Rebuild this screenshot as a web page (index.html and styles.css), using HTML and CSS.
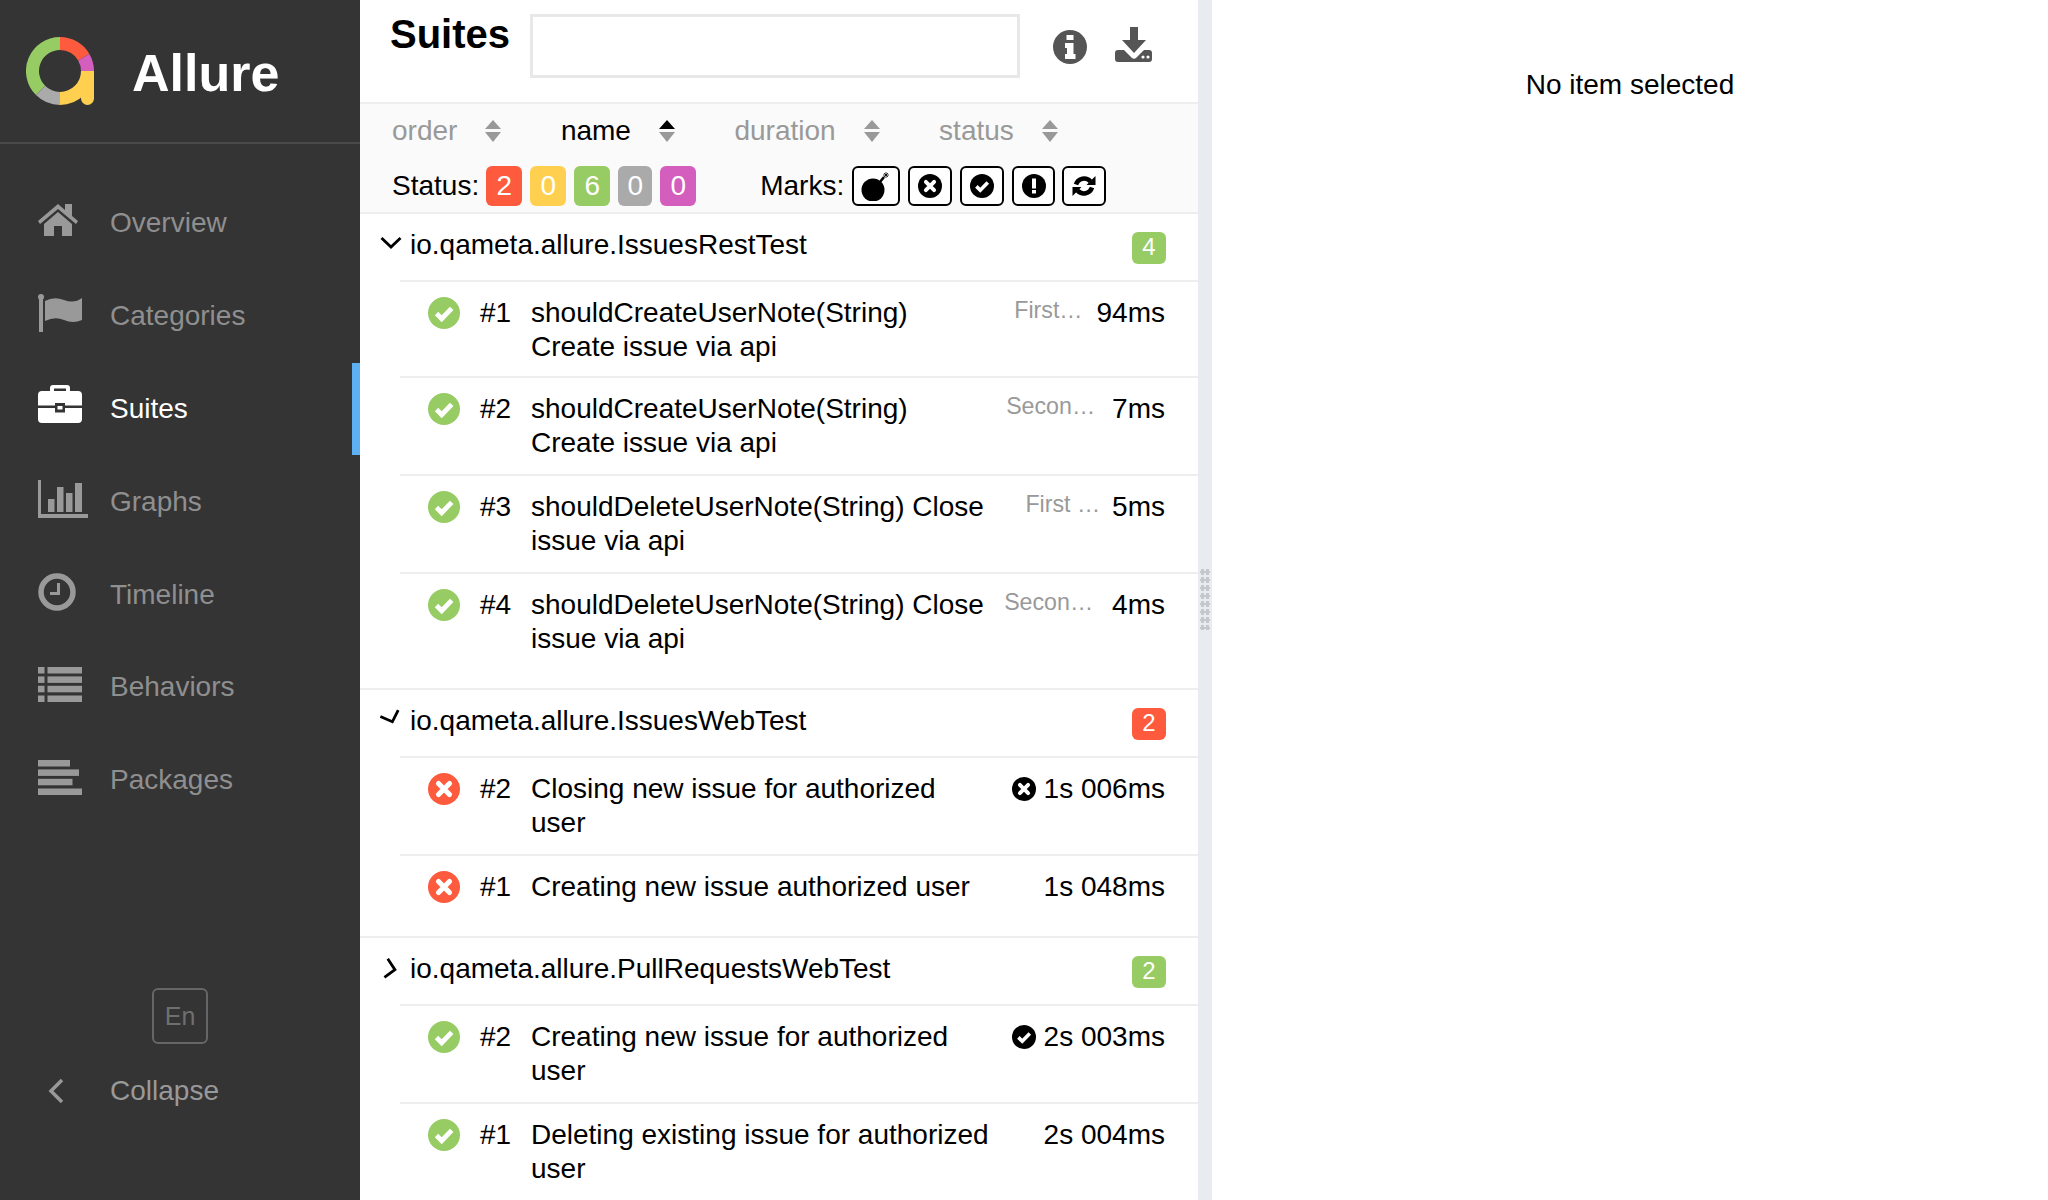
FILE: index.html
```html
<!DOCTYPE html>
<html lang="en">
<head>
  <meta charset="UTF-8" />
  <meta name="viewport" content="width=device-width, initial-scale=1.0"/>
  <title>Allure</title>
  <link rel="stylesheet" href="styles.css">
</head>
<body>
  <!-- shared icons -->
  <svg class="icon-defs">
    <symbol id="i-check" viewBox="0 0 32 32">
      <circle cx="16" cy="16" r="16" fill="currentColor"/>
      <polyline points="8.5,16.5 13.7,21.7 23.7,11.3" fill="none" stroke="#fff" stroke-width="4.8"/>
    </symbol>
    <symbol id="i-cross" viewBox="0 0 32 32">
      <circle cx="16" cy="16" r="16" fill="currentColor"/>
      <path d="M10.5 10.5 L21.5 21.5 M21.5 10.5 L10.5 21.5" fill="none" stroke="#fff" stroke-width="5.2" stroke-linecap="round"/>
    </symbol>
    <symbol id="i-sort" viewBox="0 0 16 22">
      <path d="M8 0 L16 9 H0 Z"/>
      <path d="M0 12 H16 L8 22 Z"/>
    </symbol>
  </svg>

  <div class="app">
    <!-- Sidebar -->
    <aside class="side">
      <div class="brand">
        <svg class="logo" viewBox="0 0 68 68">
          <g fill="none" stroke-width="13">
            <path stroke="#97cc64" d="M14.55 53.45 A27.5 27.5 0 0 1 34 6.5"/>
            <path stroke="#fd5a3e" d="M34 6.5 A27.5 27.5 0 0 1 57.8 20.25"/>
            <path stroke="#d35ebe" d="M57.8 20.25 A27.5 27.5 0 0 1 61.5 34"/>
            <path stroke="#ffd050" d="M61.5 34 A27.5 27.5 0 0 1 34 61.5"/>
            <path stroke="#aaa" d="M34 61.5 A27.5 27.5 0 0 1 14.55 53.45"/>
          </g>
          <path fill="#ffd050" d="M55 34 H68 V61.5 A6.5 6.5 0 0 1 55 61.5 Z"/>
        </svg>
        <span class="brand-name">Allure</span>
      </div>

      <nav class="nav">
        <a class="nav-item">
          <span class="nav-icon">
            <svg width="40" height="32" viewBox="0 0 40 32"><path d="M20 0 L0 17 L2 20 L20 5 L38 20 L40 17 L34 12 V0 H27 V6 Z"/><path d="M6 20 L20 8 L34 20 V32 H24 V22 H16 V32 H6 Z"/></svg>
          </span>
          Overview
        </a>
        <a class="nav-item">
          <span class="nav-icon">
            <svg width="44" height="38" viewBox="0 0 44 38"><circle cx="3" cy="3" r="3"/><rect x="1" y="3" width="4" height="35"/><path d="M7 7 Q16 2 26 6 T44 4 V26 Q35 30 26 26 T7 27 Z"/></svg>
          </span>
          Categories
        </a>
        <a class="nav-item active">
          <span class="nav-icon">
            <svg width="44" height="38" viewBox="0 0 44 38"><path d="M12 6 V3 Q12 0 15 0 H29 Q32 0 32 3 V6 H28 V3.500 H16 V6 Z"/><path d="M4 6 H40 Q44 6 44 10 V20.500 H27 V18 H17 V20.500 H0 V10 Q0 6 4 6 Z"/><path d="M0 23 H17 V27.500 H27 V23 H44 V34 Q44 38 40 38 H4 Q0 38 0 34 Z"/><rect x="19.500" y="21" width="5" height="3.500"/></svg>
          </span>
          Suites
        </a>
        <a class="nav-item">
          <span class="nav-icon">
            <svg width="50" height="38" viewBox="0 0 50 38"><path d="M0 0 H3 V34 H50 V38 H0 Z"/><rect x="10" y="19" width="6.500" height="13"/><rect x="19" y="7" width="6.500" height="25"/><rect x="28" y="13" width="6.500" height="19"/><rect x="37" y="3" width="7" height="29"/></svg>
          </span>
          Graphs
        </a>
        <a class="nav-item">
          <span class="nav-icon">
            <svg width="38" height="38" viewBox="0 0 38 38"><circle cx="19" cy="19" r="16" class="clock-ring"/><path d="M22 10 V22 H12 V19 H19 V10 Z"/></svg>
          </span>
          Timeline
        </a>
        <a class="nav-item">
          <span class="nav-icon">
            <svg width="44" height="35" viewBox="0 0 44 35">
              <rect width="6.500" height="6.500"/><rect x="9.500" width="34.500" height="6.500"/>
              <rect y="9.400" width="6.500" height="6.500"/><rect x="9.500" y="9.400" width="34.500" height="6.500"/>
              <rect y="18.800" width="6.500" height="6.500"/><rect x="9.500" y="18.800" width="34.500" height="6.500"/>
              <rect y="28.500" width="6.500" height="6.500"/><rect x="9.500" y="28.500" width="34.500" height="6.500"/>
            </svg>
          </span>
          Behaviors
        </a>
        <a class="nav-item">
          <span class="nav-icon">
            <svg width="44" height="35" viewBox="0 0 44 35"><rect width="32" height="6.500"/><rect y="9.400" width="41" height="6.500"/><rect y="18.800" width="34.500" height="6.500"/><rect y="28.500" width="44" height="6.500"/></svg>
          </span>
          Packages
        </a>
      </nav>

      <div class="side-foot">
        <div class="lang">En</div>
        <a class="collapse">
          <span class="collapse-icon">
            <svg width="16" height="26" viewBox="0 0 16 26"><polyline points="14,2 3,13 14,24" fill="none" stroke="#999" stroke-width="3.500"/></svg>
          </span>
          Collapse
        </a>
      </div>
    </aside>

    <!-- Tree pane -->
    <main class="pane">
      <header class="pane-head">
        <h2 class="pane-title">Suites</h2>
        <input type="text" class="search" />
        <svg class="head-info" width="34" height="34" viewBox="0 0 34 34">
          <circle cx="17" cy="17" r="17" fill="#555"/>
          <path fill="#fff" d="M13.500 5 H20.500 V10 H13.500 Z M12 13 H20.500 V24 H22.500 V29 H12 V24 H14 V18 H12 Z"/>
        </svg>
        <svg class="head-download" width="37" height="35" viewBox="0 0 37 35">
          <path fill="#555" d="M15 0 H23 V13 H31 L19 26 L7 13 H15 Z"/>
          <path fill="#555" d="M3 23 H9 L17 31 Q19 32.500 21 31 L29 23 H34 Q37 23 37 26 V32 Q37 35 34 35 H3 Q0 35 0 32 V26 Q0 23 3 23 Z"/>
          <circle cx="28" cy="30" r="1.600" fill="#fff"/><circle cx="33" cy="30" r="1.600" fill="#fff"/>
        </svg>
      </header>

      <div class="toolbar">
        <div class="sorters">
          <span class="sorter">order <svg class="sort-icon"><use href="#i-sort"/></svg></span>
          <span class="sorter sorter-active">name
            <svg class="sort-icon" viewBox="0 0 16 22"><path class="sort-on" d="M8 0 L16 9 H0 Z"/><path d="M0 12 H16 L8 22 Z"/></svg>
          </span>
          <span class="sorter">duration <svg class="sort-icon"><use href="#i-sort"/></svg></span>
          <span class="sorter">status <svg class="sort-icon"><use href="#i-sort"/></svg></span>
        </div>
        <div class="filters">
          <span class="filter-label">Status:</span>
          <div class="chips">
            <span class="chip failed">2</span>
            <span class="chip broken">0</span>
            <span class="chip passed">6</span>
            <span class="chip skipped">0</span>
            <span class="chip unknown">0</span>
          </div>
          <span class="filter-label marks-label">Marks:</span>
          <div class="marks">
            <span class="mark mark-bomb">
              <svg width="36" height="30" viewBox="0 0 36 30">
                <circle cx="15" cy="19" r="11.500"/>
                <path d="M22 11 L26 6" stroke="#000" stroke-width="2.500"/>
                <path d="M28 1 V7 M25 4 H31 M26 2 L30 6 M30 2 L26 6" stroke="#000" stroke-width="0.800"/>
              </svg>
            </span>
            <span class="mark"><svg width="24" height="24"><use href="#i-cross"/></svg></span>
            <span class="mark"><svg width="24" height="24"><use href="#i-check"/></svg></span>
            <span class="mark mark-alert">
              <svg width="24" height="24" viewBox="0 0 24 24"><circle cx="12" cy="12" r="12"/><rect x="10" y="4.500" width="4" height="10" fill="#fff"/><rect x="10" y="16" width="4" height="3.500" fill="#fff"/></svg>
            </span>
            <span class="mark mark-retry">
              <svg width="26" height="24" viewBox="0 0 24 24">
                <g fill="none" stroke="#000" stroke-width="4.600"><path d="M4 10.500 A8.500 8.500 0 0 1 18.500 7.500"/><path d="M20 13.500 A8.500 8.500 0 0 1 5.500 16.500"/></g>
                <path d="M23.500 2 V11 H14.500 Z"/><path d="M0.500 22 V13 H9.500 Z"/>
              </svg>
            </span>
          </div>
        </div>
      </div>

      <div class="tree">
        <section class="group">
          <div class="group-head">
            <svg class="chevron" width="22" height="14" viewBox="0 0 22 14"><polyline points="1.500,2 11,11 20.500,2" fill="none" stroke="#000" stroke-width="2.800"/></svg>
            <span class="group-name">io.qameta.allure.IssuesRestTest</span>
            <span class="count passed">4</span>
          </div>
          <div class="row row-tight">
            <svg class="status-icon is-passed"><use href="#i-check"/></svg>
            <span class="num">#1</span>
            <span class="name">shouldCreateUserNote(String)<br>Create issue via api</span>
            <span class="param param-a">First…</span>
            <span class="time">94ms</span>
          </div>
          <div class="row">
            <svg class="status-icon is-passed"><use href="#i-check"/></svg>
            <span class="num">#2</span>
            <span class="name">shouldCreateUserNote(String)<br>Create issue via api</span>
            <span class="param param-b">Secon…</span>
            <span class="time">7ms</span>
          </div>
          <div class="row">
            <svg class="status-icon is-passed"><use href="#i-check"/></svg>
            <span class="num">#3</span>
            <span class="name">shouldDeleteUserNote(String) Close<br>issue via api</span>
            <span class="param param-c">First …</span>
            <span class="time">5ms</span>
          </div>
          <div class="row">
            <svg class="status-icon is-passed"><use href="#i-check"/></svg>
            <span class="num">#4</span>
            <span class="name">shouldDeleteUserNote(String) Close<br>issue via api</span>
            <span class="param param-d">Secon…</span>
            <span class="time">4ms</span>
          </div>
        </section>

        <section class="group">
          <div class="group-head">
            <svg class="chevron chevron-turn1" width="22" height="14" viewBox="0 0 22 14"><polyline points="1.500,2 11,11 20.500,2" fill="none" stroke="#000" stroke-width="2.800"/></svg>
            <span class="group-name">io.qameta.allure.IssuesWebTest</span>
            <span class="count failed">2</span>
          </div>
          <div class="row">
            <svg class="status-icon is-failed"><use href="#i-cross"/></svg>
            <span class="num">#2</span>
            <span class="name">Closing new issue for authorized<br>user</span>
            <span class="time"><svg class="time-icon"><use href="#i-cross"/></svg>1s 006ms</span>
          </div>
          <div class="row">
            <svg class="status-icon is-failed"><use href="#i-cross"/></svg>
            <span class="num">#1</span>
            <span class="name">Creating new issue authorized user</span>
            <span class="time">1s 048ms</span>
          </div>
        </section>

        <section class="group">
          <div class="group-head">
            <svg class="chevron chevron-turn2" width="22" height="14" viewBox="0 0 22 14"><polyline points="1.500,2 11,11 20.500,2" fill="none" stroke="#000" stroke-width="2.800"/></svg>
            <span class="group-name">io.qameta.allure.PullRequestsWebTest</span>
            <span class="count passed">2</span>
          </div>
          <div class="row">
            <svg class="status-icon is-passed"><use href="#i-check"/></svg>
            <span class="num">#2</span>
            <span class="name">Creating new issue for authorized<br>user</span>
            <span class="time"><svg class="time-icon"><use href="#i-check"/></svg>2s 003ms</span>
          </div>
          <div class="row">
            <svg class="status-icon is-passed"><use href="#i-check"/></svg>
            <span class="num">#1</span>
            <span class="name">Deleting existing issue for authorized<br>user</span>
            <span class="time">2s 004ms</span>
          </div>
        </section>
      </div>
    </main>

    <div class="splitter"><div class="grip"></div></div>

    <!-- Details pane -->
    <section class="details">No item selected</section>
  </div>
</body>
</html>
```

FILE: styles.css
```css
* {
  margin: 0;
  padding: 0;
  box-sizing: border-box;
  font-family: 'Liberation Sans', Arial, sans-serif;
}

html, body {
  height: 100%;
  overflow: hidden;
}

body {
  background: #fff;
  color: #000;
  font-size: 28px;
  line-height: 34px;
}

.icon-defs {
  display: none;
}

.app {
  display: flex;
  height: 1200px;
}

/* sidebar */
.side {
  width: 360px;
  flex-shrink: 0;
  display: flex;
  flex-direction: column;
  background: #343434;
  color: #8f8f8f;
}

.brand {
  height: 144px;
  display: flex;
  align-items: center;
  padding-left: 26px;
  border-bottom: 2px solid #4a4a4a;
}

.logo {
  width: 68px;
  height: 68px;
  flex-shrink: 0;
}

.brand-name {
  margin: 3px 0 0 38px;
  color: #fff;
  font-size: 52px;
  font-weight: bold;
  line-height: 60px;
}

.nav {
  padding-top: 33px;
}

.nav-item {
  height: 92.8px;
  display: flex;
  align-items: center;
  padding-left: 38px;
}

.nav-icon {
  width: 72px;
  flex-shrink: 0;
  display: flex;
  align-items: center;
  margin-top: -6px;
  fill: #999;
}

.nav-icon svg {
  display: block;
}

.clock-ring {
  fill: none;
  stroke: #999;
  stroke-width: 5.5;
}

.nav-item.active {
  color: #fff;
  box-shadow: inset -8px 0 0 #5eb0f5;
}

.nav-item.active .nav-icon {
  margin-top: -10px;
  fill: #fff;
}

.side-foot {
  margin-top: auto;
  display: flex;
  flex-direction: column;
  align-items: center;
  padding-bottom: 92px;
}

.lang {
  width: 56px;
  height: 56px;
  display: flex;
  align-items: center;
  justify-content: center;
  border: 2px solid #666;
  border-radius: 6px;
  color: #6f6f6f;
  font-size: 25px;
}

.collapse {
  align-self: stretch;
  display: flex;
  align-items: center;
  margin-top: 30px;
  padding-left: 48px;
  color: #999;
}

.collapse-icon {
  width: 62px;
  display: flex;
}

/* tree pane */
.pane {
  width: 838px;
  flex-shrink: 0;
  overflow: hidden;
  background: #fff;
}

.pane-head {
  height: 104px;
  display: flex;
  align-items: flex-start;
  padding: 14px 0 0 30px;
  border-bottom: 2px solid #eee;
}

.pane-title {
  width: 140px;
  font-size: 40px;
  font-weight: bold;
  line-height: 40px;
}

.search {
  width: 490px;
  height: 64px;
  border: 3px solid #e8e8e8;
  background: #fff;
}

.head-info {
  margin: 16px 0 0 33px;
}

.head-download {
  margin: 13px 0 0 28px;
}

.toolbar {
  height: 110px;
  padding: 10px 0 0 32px;
  background: #fafafa;
  border-bottom: 2px solid #eee;
}

.sorters {
  display: flex;
  gap: 59.5px;
  height: 34px;
  color: #999;
}

.sorter {
  display: flex;
  align-items: center;
  gap: 28px;
}

.sorter-active {
  color: #000;
}

.sort-icon {
  width: 16px;
  height: 22px;
  fill: #999;
}

.sort-on {
  fill: #000;
}

.filters {
  display: flex;
  align-items: center;
  margin-top: 18px;
  height: 40px;
}

.chips,
.marks {
  display: flex;
  gap: 8px;
  margin-left: 7px;
}

.marks {
  margin-left: 8px;
}

.marks-label {
  margin-left: 64px;
}

.chip {
  width: 36px;
  height: 40px;
  border-radius: 6px;
  color: #fff;
  text-align: center;
  line-height: 40px;
}

.chip.skipped {
  width: 34px;
}

.failed {
  background: #fd5a3e;
}

.broken {
  background: #ffd050;
}

.passed {
  background: #97cc64;
}

.skipped {
  background: #aaa;
}

.unknown {
  background: #d35ebe;
}

.mark {
  width: 44px;
  height: 40px;
  display: flex;
  align-items: center;
  justify-content: center;
  background: #fff;
  border: 2.5px solid #000;
  border-radius: 6px;
}

.mark-bomb {
  width: 48px;
}

.mark-alert {
  width: 43px;
}

.mark-retry {
  margin-left: -1px;
}

.tree {
  overflow: hidden;
}

.group {
  padding-bottom: 18px;
  border-bottom: 2px solid #eee;
}

.group-head {
  height: 66px;
  display: flex;
  align-items: flex-start;
  padding: 14px 32px 0 20px;
}

.chevron {
  margin: 8px 8px 0 0;
  flex-shrink: 0;
}

.chevron-turn1 {
  transform: rotate(-20deg);
  margin-top: 7px;
}

.chevron-turn2 {
  transform: rotate(-80deg);
  margin-top: 10px;
}

.group-name {
  flex: 1;
}

.count {
  width: 34px;
  height: 32px;
  margin-top: 4px;
  border-radius: 6px;
  color: #fff;
  font-size: 24px;
  line-height: 30px;
  text-align: center;
}

.row {
  display: flex;
  align-items: flex-start;
  margin-left: 40px;
  padding: 14px 33px 14px 28px;
  border-top: 2px solid #eee;
}

.row-tight {
  padding-bottom: 12px;
}

.status-icon {
  width: 32px;
  height: 32px;
  margin: 1px 20px 0 0;
  flex-shrink: 0;
}

.is-passed {
  color: #97cc64;
}

.is-failed {
  color: #fd5a3e;
}

.num {
  width: 51px;
  flex-shrink: 0;
}

.name {
  flex: 1;
}

.param {
  flex-shrink: 0;
  margin-top: -3px;
  color: #999;
  font-size: 23.2px;
  white-space: nowrap;
}

.param-a {
  margin-right: 14px;
}

.param-b {
  margin-right: 17px;
}

.param-c {
  margin-right: 12px;
}

.param-d {
  margin-right: 19px;
}

.time {
  display: flex;
  align-items: center;
  gap: 8px;
  flex-shrink: 0;
  white-space: nowrap;
}

.time-icon {
  width: 24px;
  height: 24px;
}

/* splitter and details */
.splitter {
  width: 14px;
  flex-shrink: 0;
  display: flex;
  align-items: center;
  justify-content: center;
  background: #e8ecf0;
}

.grip {
  width: 10px;
  height: 62px;
  margin-top: -2px;
  background-image: radial-gradient(#c4c8cc 60%, transparent 62%);
  background-size: 5px 8px;
}

.details {
  flex: 1;
  padding-top: 68px;
  text-align: center;
}
```
